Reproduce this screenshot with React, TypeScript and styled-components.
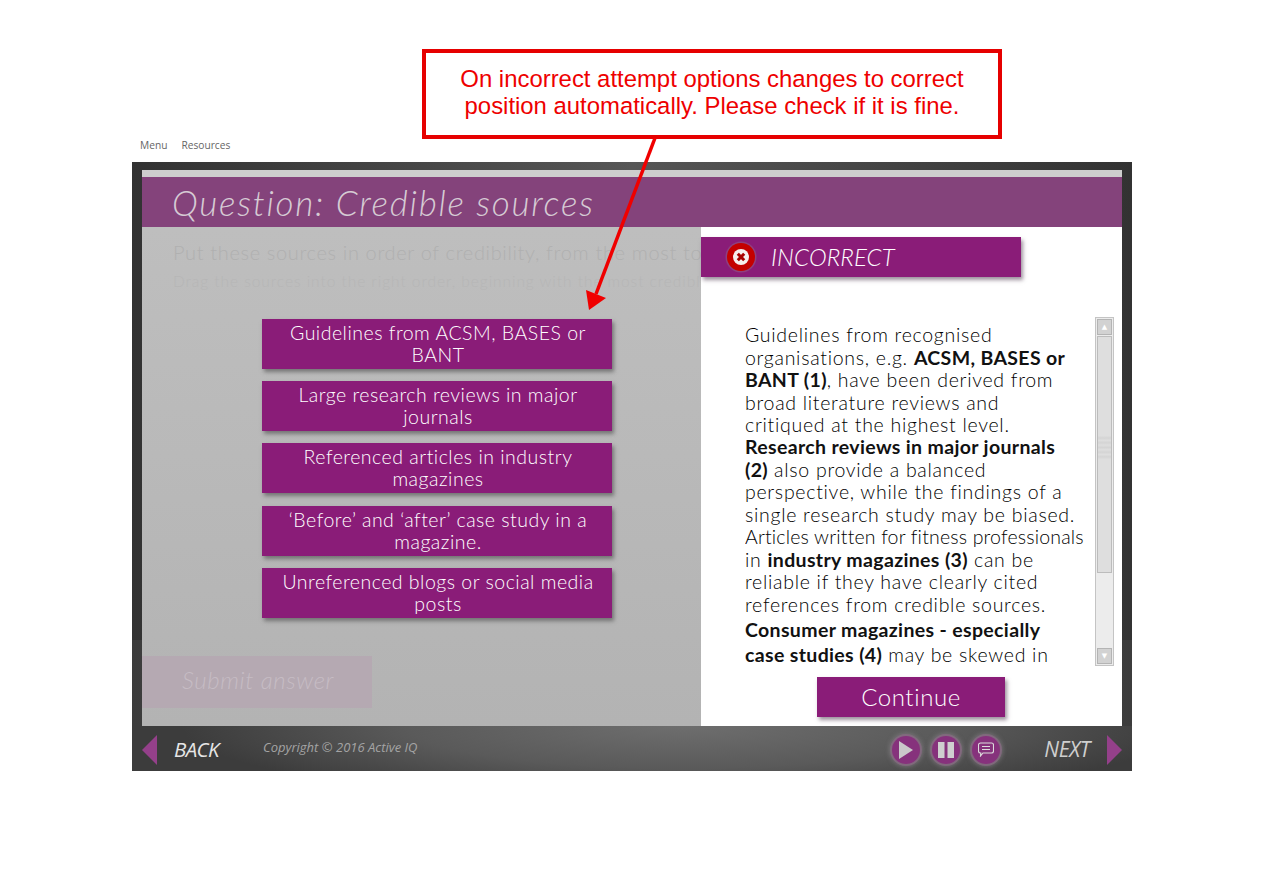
import React from 'react';
import styled, { createGlobalStyle } from 'styled-components';

const GlobalStyle = createGlobalStyle`
  html, body {
    margin: 0;
    padding: 0;
    background: #fff;
  }
`;

const gothic = `Lato, 'Open Sans', sans-serif`;
const purple = '#8a1c78';

const Page = styled.div`
  position: relative;
  width: 1272px;
  height: 890px;
  padding: 137px 0 0 132px;
  box-sizing: border-box;
  overflow: hidden;
`;

const Callout = styled.div`
  position: absolute;
  left: 422px;
  top: 49px;
  width: 580px;
  height: 90px;
  box-sizing: border-box;
  border: 4px solid #e60000;
  background: #fff;
  z-index: 3;
  display: flex;
  align-items: center;
  justify-content: center;
  text-align: center;
  padding-bottom: 4px;
  color: #ee0000;
  font: 23.9px/27px 'Liberation Sans', Arial, sans-serif;
`;

const ArrowSvg = styled.svg`
  position: absolute;
  left: 0;
  top: 0;
  z-index: 4;
  pointer-events: none;
`;

const TopNav = styled.nav`
  display: flex;
  gap: 14px;
  height: 25px;
  padding-left: 8px;
  align-items: center;
  box-sizing: border-box;
  padding-bottom: 10px;
  font: 10.2px 'Open Sans', sans-serif;
  color: #666;
`;

const Frame = styled.div`
  width: 1000px;
  height: 609px;
  display: flex;
  flex-direction: column;
  background:
    linear-gradient(180deg, transparent 78.5%, rgba(255, 255, 255, 0.05) 78.5%),
    linear-gradient(90deg, #323232 0%, #565656 50%, #323232 100%);
`;

const Stage = styled.div`
  margin: 8px 10px 0;
  height: 556px;
  display: flex;
  flex-direction: column;
  background: #cdcdcd;
  padding-top: 7px;
  box-sizing: border-box;
`;

const TitleBar = styled.header`
  height: 50px;
  flex: none;
  background: #84437b;
  padding-left: 30px;
  color: #d6cbd4;
  font: italic 300 35px/51px ${gothic};
  letter-spacing: 1.75px;
`;

const Body = styled.div`
  flex: 1;
  display: flex;
  min-height: 0;
`;

const LeftPane = styled.section`
  width: 559px;
  flex: none;
  overflow: hidden;
  background: linear-gradient(180deg, #bebebe 0%, #b3b3b3 100%);
  display: flex;
  flex-direction: column;
`;

const Lead = styled.p`
  margin: 13px 0 0 31px;
  white-space: nowrap;
  color: #b0b0b0;
  font: 300 20px/24px ${gothic};
  letter-spacing: 0.65px;
`;

const Hint = styled.p`
  margin: 7px 0 0 31px;
  white-space: nowrap;
  color: #b6b6b6;
  font: 300 15.5px/20px ${gothic};
  letter-spacing: 0.95px;
`;

const Options = styled.div`
  margin: 28px 0 0 120px;
  width: 350px;
  display: flex;
  flex-direction: column;
  gap: 12.2px;
`;

const Option = styled.div`
  height: 50px;
  background: ${purple};
  color: #fff;
  box-shadow: 2px 3px 4px rgba(60, 60, 60, 0.55);
  text-align: center;
  font: 300 19.5px/22px ${gothic};
  letter-spacing: 0.5px;
  padding: 3px 7px 0 9px;
  box-sizing: border-box;
`;

const SubmitButton = styled.div`
  margin-top: 38px;
  width: 230px;
  height: 52px;
  background: #b5a9b2;
  color: #c6bcc4;
  padding-left: 40px;
  box-sizing: border-box;
  font: italic 300 24px/48px ${gothic};
  letter-spacing: 0.6px;
`;

const RightPane = styled.section`
  flex: 1;
  background: #fff;
  display: flex;
  flex-direction: column;
  min-width: 0;
`;

const Banner = styled.div`
  margin-top: 10px;
  width: 320px;
  height: 40px;
  flex: none;
  display: flex;
  align-items: center;
  gap: 14px;
  padding-left: 24px;
  box-sizing: border-box;
  background: ${purple};
  color: #fff;
  box-shadow: 2px 3px 4px rgba(90, 70, 90, 0.6);
  font: italic 300 24px/40px ${gothic};
  letter-spacing: 0.1px;
`;

const FeedbackRow = styled.div`
  margin-top: 40px;
  height: 349px;
  flex: none;
  display: flex;
  justify-content: space-between;
  padding: 0 8px 0 44px;
`;

const FeedbackText = styled.div`
  height: 349px;
  overflow: hidden;
  padding-top: 7.2px;
  box-sizing: border-box;
  white-space: nowrap;
  color: #000;
  font: 300 19.5px/22.45px ${gothic};
  letter-spacing: 0.72px;

  b {
    font-weight: 700;
    color: #111;
    letter-spacing: 0.35px;
  }
`;

const TightLine = styled.span`
  letter-spacing: 0.18px;
`;

const TightLines = styled.div`
  line-height: 25px;
  margin-top: 1px;
`;

const Scrollbar = styled.div`
  width: 19px;
  height: 349px;
  box-sizing: border-box;
  border: 1px solid #c4c4c4;
  background: #ececec;
  padding: 1px;
  display: flex;
  flex-direction: column;
`;

const ScrollButton = styled.div`
  height: 16px;
  flex: none;
  background: #d2d2d2;
  border: 1px solid #b4b4b4;
  box-sizing: border-box;
  display: flex;
  align-items: center;
  justify-content: center;
  color: #fff;
  font: 7px/1 'DejaVu Sans', sans-serif;
`;

const ScrollThumb = styled.div`
  height: 237px;
  flex: none;
  box-sizing: border-box;
  border: 1px solid #bcbcbc;
  margin-top: 1px;
  background: linear-gradient(
    180deg,
    #dedede 0%,
    #dedede 42%,
    #d4d4d4 43%,
    #dedede 44%,
    #d4d4d4 45%,
    #dedede 46%,
    #d4d4d4 47%,
    #dedede 48%,
    #d4d4d4 49%,
    #dedede 50%,
    #d4d4d4 51%,
    #dedede 52%,
    #dedede 100%
  );
`;

const ScrollTrack = styled.div`
  flex: 1;
`;

const ContinueButton = styled.div`
  margin: 11px 0 0 116px;
  width: 188px;
  height: 40px;
  background: ${purple};
  color: #fff;
  box-shadow: 2px 3px 4px rgba(90, 70, 90, 0.6);
  text-align: center;
  font: 300 24px/40px ${gothic};
  letter-spacing: 0.6px;
`;

const Footer = styled.footer`
  flex: 1;
  display: flex;
  align-items: center;
  padding: 2px 10px 0;
  background: radial-gradient(ellipse 50% 170% at 55% 0%, #6e6e6e 0%, #5a5a5a 55%, #3c3c3c 100%);
`;

const BackLabel = styled.span`
  margin-left: 17px;
  width: 89px;
  color: #e6e6e6;
  font: italic 400 20.5px/1 'Open Sans', sans-serif;
  letter-spacing: -0.6px;
`;

const Copyright = styled.span`
  color: #a4a4a4;
  font: italic 400 13px/1 'Open Sans', sans-serif;
  letter-spacing: 0;
  margin-bottom: 5px;
`;

const Controls = styled.div`
  margin: 0 0 0 auto;
  display: flex;
  gap: 12px;
`;

const RoundButton = styled.div`
  width: 28px;
  height: 28px;
  border-radius: 50%;
  background: #86327c;
  box-shadow: 0 0 0 2px rgba(135, 105, 130, 0.8), 0 0 4px 3px rgba(140, 135, 140, 0.55);
  display: flex;
  align-items: center;
  justify-content: center;
`;

const NextLabel = styled.span`
  margin: 0 17px 0 44px;
  color: #cfcfcf;
  font: italic 400 21px/1 'Open Sans', sans-serif;
  letter-spacing: -0.35px;
`;

const options: string[] = [
  'Guidelines from ACSM, BASES or BANT',
  'Large research reviews in major journals',
  'Referenced articles in industry magazines',
  '‘Before’ and ‘after’ case study in a magazine.',
  'Unreferenced blogs or social media posts',
];

const Triangle: React.FC<{ flip?: boolean }> = ({ flip }) => (
  <svg width="15" height="30" viewBox="0 0 15 30">
    <polygon points={flip ? '0,0 15,15 0,30' : '15,0 0,15 15,30'} fill="#94408a" />
  </svg>
);

export default function App() {
  return (
    <Page>
      <GlobalStyle />
      <Callout>
        On incorrect attempt options changes to correct
        <br />
        position automatically. Please check if it is fine.
      </Callout>
      <ArrowSvg width="1272" height="890">
        <line x1="655" y1="138" x2="596" y2="294" stroke="#f00000" strokeWidth="3.5" />
        <polygon points="589,310 586,290 606,298" fill="#f00000" />
      </ArrowSvg>

      <TopNav>
        <span>Menu</span>
        <span>Resources</span>
      </TopNav>

      <Frame>
        <Stage>
          <TitleBar>Question: Credible sources</TitleBar>
          <Body>
            <LeftPane>
              <Lead>Put these sources in order of credibility, from the most to the least credible.</Lead>
              <Hint>Drag the sources into the right order, beginning with the most credible at the top.</Hint>
              <Options>
                {options.map((text) => (
                  <Option key={text}>{text}</Option>
                ))}
              </Options>
              <SubmitButton>Submit answer</SubmitButton>
            </LeftPane>

            <RightPane>
              <Banner>
                <svg width="32" height="32" viewBox="0 0 32 32">
                  <circle cx="16" cy="16" r="15.5" fill="#8e3f7f" />
                  <circle cx="16" cy="16" r="14" fill="#c40000" />
                  <circle cx="16" cy="16" r="8" fill="#f6eeee" />
                  <path d="M12.8 12.8l6.4 6.4M19.2 12.8l-6.4 6.4" stroke="#a80000" strokeWidth="3" />
                </svg>
                INCORRECT
              </Banner>
              <FeedbackRow>
                <FeedbackText>
                  Guidelines from recognised
                  <br />
                  organisations, e.g. <b>ACSM, BASES or</b>
                  <br />
                  <b>BANT (1)</b>, have been derived from
                  <br />
                  broad literature reviews and
                  <br />
                  critiqued at the highest level.
                  <br />
                  <b>Research reviews in major journals</b>
                  <br />
                  <b>(2)</b> also provide a balanced
                  <br />
                  perspective, while the findings of a
                  <br />
                  single research study may be biased.
                  <br />
                  <TightLine>Articles written for fitness professionals</TightLine>
                  <br />
                  in <b>industry magazines (3)</b> can be
                  <br />
                  reliable if they have clearly cited
                  <br />
                  references from credible sources.
                  <TightLines>
                    <b>Consumer magazines - especially</b>
                    <br />
                    <b>case studies (4)</b> may be skewed in
                  </TightLines>
                </FeedbackText>
                <Scrollbar>
                  <ScrollButton>▲</ScrollButton>
                  <ScrollThumb />
                  <ScrollTrack />
                  <ScrollButton>▼</ScrollButton>
                </Scrollbar>
              </FeedbackRow>
              <ContinueButton>Continue</ContinueButton>
            </RightPane>
          </Body>
        </Stage>

        <Footer>
          <Triangle />
          <BackLabel>BACK</BackLabel>
          <Copyright>Copyright © 2016 Active IQ</Copyright>
          <Controls>
            <RoundButton>
              <svg width="14" height="18" viewBox="0 0 14 18">
                <polygon points="0,0 14,9 0,18" fill="#c9c9c9" />
              </svg>
            </RoundButton>
            <RoundButton>
              <svg width="16" height="16" viewBox="0 0 16 16">
                <path d="M0 0h6.5v16H0zM9.5 0H16v16H9.5z" fill="#cfcfcf" />
              </svg>
            </RoundButton>
            <RoundButton>
              <svg width="16" height="15" viewBox="0 0 16 15" fill="none" stroke="#dcdcdc" strokeWidth="1.1">
                <path d="M2.5 1h11a2 2 0 0 1 2 2v6a2 2 0 0 1-2 2H5l-2.5 3 .3-3h-.3a2 2 0 0 1-2-2V3a2 2 0 0 1 2-2z" />
                <path d="M4 4.5h8M4 7.5h8" />
              </svg>
            </RoundButton>
          </Controls>
          <NextLabel>NEXT</NextLabel>
          <Triangle flip />
        </Footer>
      </Frame>
    </Page>
  );
}
